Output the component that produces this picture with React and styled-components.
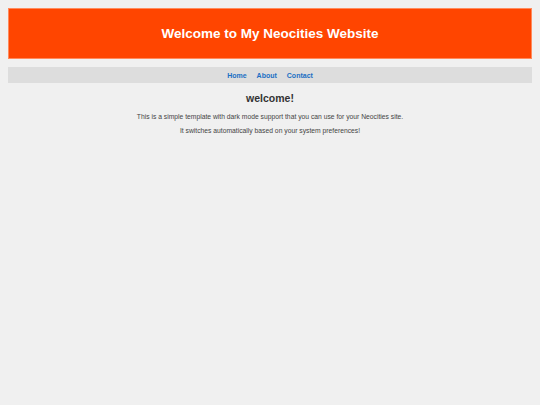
import React from 'react';
import styled, { createGlobalStyle } from 'styled-components';

const GlobalStyle = createGlobalStyle`
  html, body {
    margin: 0;
    background: #f0f0f0;
    font-family: "Liberation Sans", Arial, sans-serif;
    color: #333;
  }
`;

const Page = styled.div`
  padding: 8px;
`;

const Header = styled.header`
  background: #ff4500;
  border: 1px solid #ff8a5c;
  height: 49px;
  display: flex;
  align-items: center;
  justify-content: center;
`;

const Title = styled.h1`
  margin: 0;
  color: #fff;
  font-size: 13.5px;
  font-weight: bold;
`;

const Nav = styled.nav`
  margin-top: 8px;
  background: #dddddd;
  height: 16px;
  display: flex;
  align-items: center;
  justify-content: center;
  gap: 10px;
`;

const NavLink = styled.a`
  color: #1a6fc4;
  font-size: 7px;
  font-weight: bold;
  text-decoration: none;
`;

const Main = styled.main`
  text-align: center;
  padding-top: 9px;
`;

const Heading = styled.h2`
  margin: 0 0 9px;
  font-size: 10.5px;
  font-weight: bold;
  color: #333;
`;

const Text = styled.p`
  margin: 0 0 7px;
  font-size: 6.75px;
  color: #444;
`;

export default function App() {
  return (
    <Page>
      <GlobalStyle />
      <Header>
        <Title>Welcome to My Neocities Website</Title>
      </Header>
      <Nav>
        <NavLink href="#">Home</NavLink>
        <NavLink href="#">About</NavLink>
        <NavLink href="#">Contact</NavLink>
      </Nav>
      <Main>
        <Heading>welcome!</Heading>
        <Text>This is a simple template with dark mode support that you can use for your Neocities site.</Text>
        <Text>It switches automatically based on your system preferences!</Text>
      </Main>
    </Page>
  );
}
